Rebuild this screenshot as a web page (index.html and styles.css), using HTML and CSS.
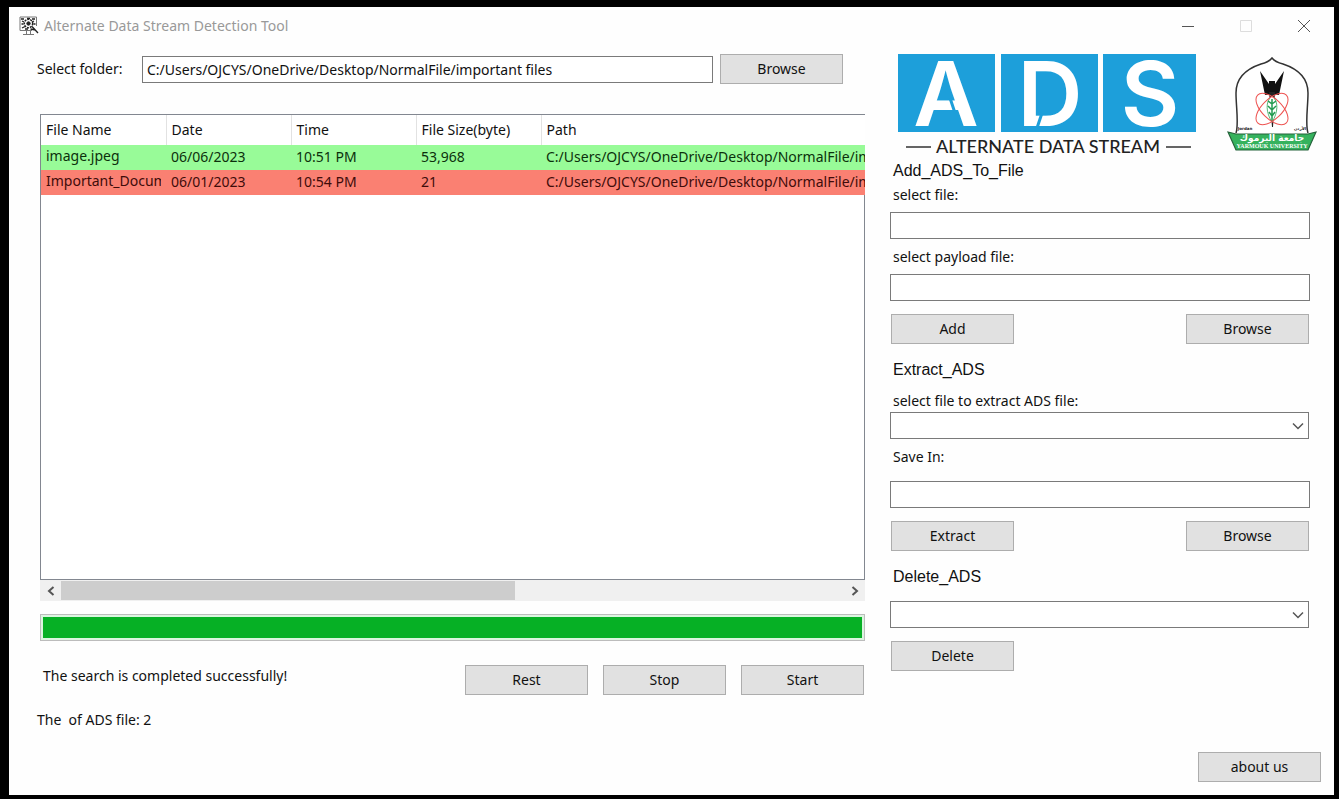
FILE: index.html
```html
<!DOCTYPE html>
<html lang="en">
<head>
<meta charset="utf-8">
<title>Alternate Data Stream Detection Tool</title>
<link rel="stylesheet" href="styles.css">
</head>
<body>
<div class="window">
  <header class="titlebar">
    <svg class="app-icon" viewBox="0 0 20 20" fill="none" stroke="#222">
      <path d="M1 1h16.500M1 1v13.500h12M17.500 1v9" stroke="#777"/>
      <path d="M7.500 15v3M11.500 15v3M4 18.500h11" stroke="#777"/>
      <path d="M2 3h3M3 5l2 1M2.500 8h2M3 12l3-1.500M6 13h3M13 3h3M15 5l-2 1M8 2.500h3M14.500 8h2" stroke-width="1.300"/>
      <circle cx="9.500" cy="7.500" r="4.200" stroke-dasharray="2 1" stroke-width="1.500"/>
      <circle cx="9.500" cy="7.500" r="1.700" fill="#222"/>
      <path d="M13 10.500l6 6.500M11.500 13l5 1" stroke-width="1.300"/>
    </svg>
    <h1 class="title">Alternate Data Stream Detection Tool</h1>
    <div class="window-controls">
      <button class="control" aria-label="Minimize"><svg viewBox="0 0 12 12"><path d="M0 6.500h12"/></svg></button>
      <button class="control control-off" aria-label="Maximize" disabled><svg viewBox="0 0 12 12"><path d="M.5.5h11v11H.5z"/></svg></button>
      <button class="control" aria-label="Close"><svg viewBox="0 0 12 12"><path d="M0 0l12 12M12 0L0 12"/></svg></button>
    </div>
  </header>

  <main class="content">
    <section class="scan">
      <div class="folder-row">
        <label class="folder-label" for="folder">Select folder:</label>
        <input class="field folder-field" id="folder" type="text" value="C:/Users/OJCYS/OneDrive/Desktop/NormalFile/important files">
        <button class="button">Browse</button>
      </div>

      <div class="results">
        <div class="list">
          <table class="files">
            <colgroup><col class="col"><col class="col"><col class="col"><col class="col"><col></colgroup>
            <thead>
              <tr><th>File Name</th><th>Date</th><th>Time</th><th>File Size(byte)</th><th>Path</th></tr>
            </thead>
            <tbody>
              <tr class="clean"><td class="name">image.jpeg</td><td>06/06/2023</td><td>10:51 PM</td><td>53,968</td><td>C:/Users/OJCYS/OneDrive/Desktop/NormalFile/important files</td></tr>
              <tr class="suspect"><td class="name"><div class="clip">Important_Document</div></td><td>06/01/2023</td><td>10:54 PM</td><td>21</td><td>C:/Users/OJCYS/OneDrive/Desktop/NormalFile/important files</td></tr>
            </tbody>
          </table>
        </div>
        <div class="scrollbar">
          <button class="arrow" aria-label="Scroll left"><svg viewBox="0 0 8 10"><path d="M6.500 1L2 5l4.500 4"/></svg></button>
          <div class="track"><div class="thumb"></div></div>
          <button class="arrow" aria-label="Scroll right"><svg viewBox="0 0 8 10"><path d="M1.500 1L6 5 1.500 9"/></svg></button>
        </div>
        <progress class="progress" value="100" max="100" aria-label="Search progress"></progress>
      </div>

      <div class="status-row">
        <p class="status">The search is completed successfully!</p>
        <div class="actions">
          <button class="button">Rest</button>
          <button class="button">Stop</button>
          <button class="button">Start</button>
        </div>
      </div>
      <p class="count">The&nbsp; of ADS file: 2</p>
    </section>

    <aside class="tools">
      <div class="brand">
        <svg class="logo" viewBox="0 0 300 104" role="img" aria-label="ADS Alternate Data Stream">
          <g fill="#1d9fda"><path d="M1 1h97v78H1zM104 1h97v78h-97zM206 1h93v78h-93z"/></g>
          <g class="logo-letters"><text x="49" y="73">A</text><text x="153" y="73">D</text><text x="253" y="73">S</text></g>
          <path d="M53 45l5 15M145 60l-5 15" stroke="#1d9fda" stroke-width="3"/>
          <path d="M9 94h25M269 94h25" stroke="#333" stroke-width="1.500"/>
          <text class="logo-tag" x="151" y="100">ALTERNATE DATA STREAM</text>
        </svg>
        <svg class="crest" viewBox="0 0 90 96" role="img" aria-label="Yarmouk University">
          <path d="M9 77C12 68 9 51 9 37C9 18 25 11 34 8Q42 6 45 2Q48 6 56 8C65 11 81 18 81 37C81 51 78 68 81 77" fill="#fff" stroke="#333" stroke-width="1.500"/>
          <path d="M33 15l9 13V25h6v3l9-13-5 24H38z" fill="#111"/>
          <path d="M42 36h6l-2 35h-1z" fill="#222"/>
          <path d="M45 40c7 5 6 17 0 26c-6-9-7-21 0-26z" fill="#fff" stroke="#58b879"/>
          <path d="M45 43v22M45 48l-4-3M45 48l4-3M45 54l-4-4M45 54l4-4M45 60l-3-4M45 60l3-4" stroke="#239b51" stroke-width="1.500" fill="none"/>
          <g fill="none" stroke="#ee5351"><ellipse cx="45" cy="53" rx="20" ry="10" transform="rotate(44 45 53)"/><ellipse cx="45" cy="53" rx="20" ry="10" transform="rotate(-44 45 53)"/></g>
          <path d="M1 76l8 2h72l8-2-8 18H9z" fill="#35b25d" stroke="#25633b" stroke-width="1.200"/>
          <text class="crest-side" x="18" y="74">Jordan</text><text class="crest-side" x="73" y="74">الأردن</text>
          <text class="crest-arabic" x="45" y="85">جامعة اليرموك</text>
          <text class="crest-name" x="45" y="92">YARMOUK UNIVERSITY</text>
        </svg>
      </div>

      <section class="group">
        <h2 class="heading">Add_ADS_To_File</h2>
        <label class="label" for="target">select file:</label>
        <input class="field after-label" id="target" type="text">
        <label class="label below-field" for="payload">select payload file:</label>
        <input class="field after-label" id="payload" type="text">
        <div class="button-row"><button class="button">Add</button><button class="button">Browse</button></div>
      </section>

      <section class="group">
        <h2 class="heading heading-wide">Extract_ADS</h2>
        <label class="label" for="source">select file to extract ADS file:</label>
        <div class="combo">
          <select class="field" id="source"><option></option></select>
          <svg class="chevron" viewBox="0 0 12 12"><path d="M1 3.500l5 5 5-5"/></svg>
        </div>
        <label class="label below-field" for="save">Save In:</label>
        <input class="field save-field" id="save" type="text">
        <div class="button-row"><button class="button">Extract</button><button class="button">Browse</button></div>
      </section>

      <section class="group">
        <h2 class="heading heading-wide"><label for="remove">Delete_ADS</label></h2>
        <div class="combo">
          <select class="field" id="remove"><option></option></select>
          <svg class="chevron" viewBox="0 0 12 12"><path d="M1 3.500l5 5 5-5"/></svg>
        </div>
        <div class="button-row"><button class="button">Delete</button></div>
      </section>

      <button class="button about">about us</button>
    </aside>
  </main>
</div>
</body>
</html>
```
FILE: styles.css
```css
* { box-sizing: border-box; }

body {
  margin: 0;
  min-height: 100vh;
  display: flex;
  padding: 7px 5px 4px 9px;
  background: #000;
  color: #111;
  font: 14px/20px "Noto Sans", "Open Sans", sans-serif;
}

h1, h2, p { margin: 0; font-weight: 400; }
button, input, select { font: inherit; color: inherit; }

.window {
  flex: 1;
  min-width: 0;
  display: flex;
  flex-direction: column;
  background: #fefefe;
}

/* Title bar */
.titlebar { display: flex; align-items: center; height: 38px; padding: 0 1px 0 10px; }
.app-icon { width: 20px; height: 20px; }
.title { flex: 1; margin-left: 5px; font-size: 14px; color: #999; }
.window-controls { display: flex; }
.control { display: flex; justify-content: center; align-items: center; width: 58px; height: 38px; padding: 0; border: 0; background: none; }
.control svg { width: 12px; height: 12px; fill: none; stroke: #555; overflow: visible; }
.control-off svg { stroke: #ddd; }

/* Layout */
.content {
  flex: 1;
  display: grid;
  grid-template-columns: minmax(0, 1fr) 431px;
  gap: 25px;
  padding: 9px 13px 13px 28px;
}

.button {
  flex: none;
  width: 123px;
  height: 30px;
  padding: 0;
  border: 1px solid #adadad;
  background: #e1e1e1;
}

.field {
  display: block;
  width: 100%;
  height: 27px;
  padding: 0 4px;
  border: 1px solid #7a7a7a;
  border-radius: 0;
  background: #fff;
}

/* Folder search */
.folder-row { display: flex; align-items: center; padding-right: 22px; }
.folder-label { flex: none; width: 105px; }
.folder-field { flex: 1; min-width: 0; margin-right: 7px; }

.results { margin: 30px 0 0 3px; }
.list {
  height: 466px;
  padding: 1px 0 0 1px;
  overflow: hidden;
  background: #fff;
  box-shadow: inset 0 0 0 1px #828790;
}
.files { width: 1000px; table-layout: fixed; border-collapse: collapse; }
.col { width: 125px; }
.files th {
  height: 30px;
  padding: 0 5px;
  border-right: 1px solid #e2e2e2;
  background: #fff;
  font-weight: 400;
  text-align: left;
  white-space: nowrap;
}
.files td { height: 25px; padding: 0 0 1px 5px; line-height: 20px; white-space: nowrap; }
.files .name { padding: 0 5px 4px; }
.clip { overflow: hidden; }
.clean { background: #98fb98; color: #0c300c; }
.suspect { background: #fa8072; color: #400c0a; }

.scrollbar { display: flex; height: 21px; background: #f0f0f0; }
.arrow { display: flex; align-items: center; justify-content: center; width: 21px; padding: 0; border: 0; background: none; }
.arrow svg { width: 8px; height: 10px; fill: none; stroke: #555; stroke-width: 2; }
.track { flex: 1; padding: 1px 0; }
.thumb { width: 58%; height: 19px; background: #cdcdcd; }

.progress {
  display: block;
  width: 100%;
  height: 27px;
  margin-top: 13px;
  padding: 2px;
  border: 1px solid #bcbcbc;
  background: #dcf5e0;
  appearance: none;
}
.progress::-webkit-progress-bar { background: #dcf5e0; }
.progress::-webkit-progress-value { background: #06b025; }

.status-row { display: flex; justify-content: space-between; margin-top: 24px; padding-right: 1px; }
.status { padding: 1px 0 0 6px; }
.actions { display: flex; gap: 15px; }
.count { margin-top: 15px; }

/* Side panel */
.tools { display: flex; flex-direction: column; }
.brand { display: flex; justify-content: space-between; height: 106px; padding: 0 4px 0 7px; }
.logo { width: 300px; height: 104px; margin-top: -1px; }
.logo-letters { font: 600 90px Inter, sans-serif; fill: #fff; text-anchor: middle; }
.logo-tag { font: 500 18px Lato, sans-serif; fill: #222; text-anchor: middle; }
.crest { width: 90px; height: 96px; margin-top: 2px; }
.crest text { text-anchor: middle; }
.crest-side { font: 700 4px "DejaVu Sans", sans-serif; fill: #222; }
.crest-arabic { font: 700 9px "DejaVu Sans", sans-serif; fill: #fff; }
.crest-name { font: 700 6px "Liberation Serif", serif; fill: #fff; }

.group { padding-right: 11px; }
.heading { height: 22px; padding-left: 3px; margin-bottom: 3px; font: 16px/22px "Liberation Sans", Arial, sans-serif; }
.heading-wide { margin: 15px 0 10px; }
.label { display: block; padding-left: 3px; }
.after-label { margin-top: 7px; }
.below-field { margin-top: 8px; }
.save-field { margin-top: 14px; }
.combo { position: relative; margin: 1px 1px 0 0; }
.combo .field { appearance: none; }
.heading-wide + .combo { margin-top: 13px; }
.chevron { position: absolute; top: 8px; right: 5px; width: 12px; height: 12px; fill: none; stroke: #555; stroke-width: 1.500; pointer-events: none; }
.button-row { display: flex; justify-content: space-between; margin-top: 13px; padding: 0 1px; }
.about { margin: auto 0 0 auto; }
```
